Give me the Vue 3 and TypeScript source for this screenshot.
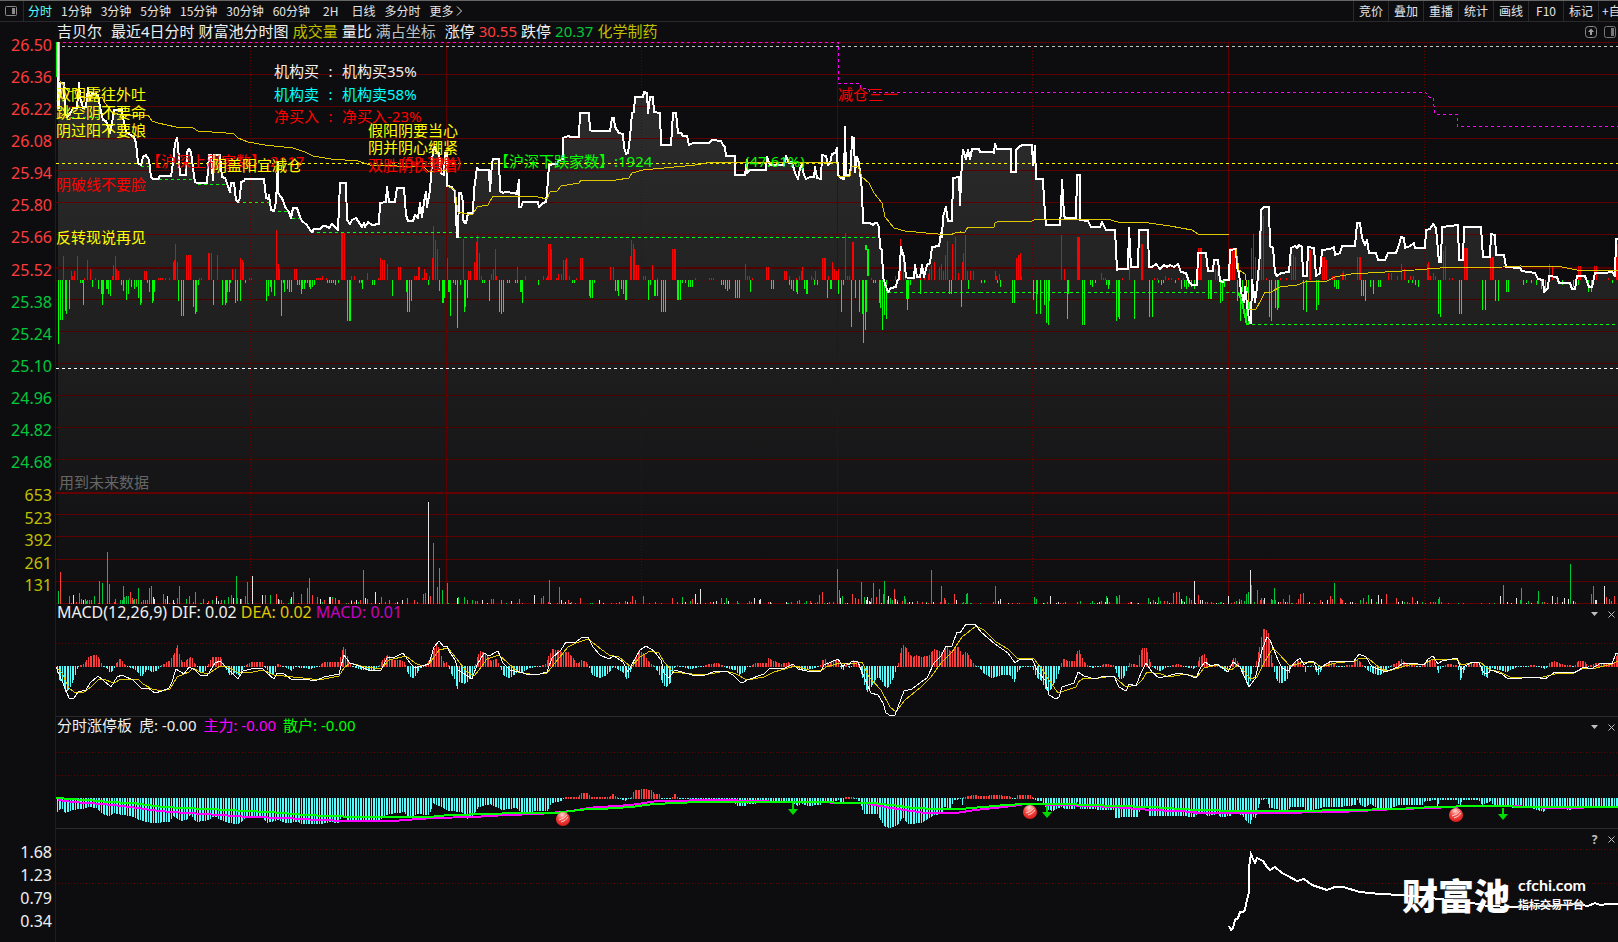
<script setup lang="ts">
type Point = [number, number]
interface Chunk { x0: number; y0: number; w: number; d: string }
interface Note { x: number; y: number; text: string; tone: string }

const UNIT = 1568
const LEFT = 56
const WIDTH = 1562
const MINUTES = 960

/* Series are stored in chunks: an origin, the width that the chunk spans, and "x,y" samples. */
const chunk = (x0: number, y0: number, w: number, d: string): Chunk => ({ x0, y0, w, d })

function pts(c: Chunk): Point[] {
  return c.d.trim().split(/\s+/).map((p): Point => {
    const [x, y] = p.split(',').map(Number)
    return [Math.round(c.x0 + (x * c.w) / UNIT), Math.round(c.y0 + y / 3)]
  })
}
const all = (cs: Chunk[]): Point[] => cs.flatMap(pts)
const line = (p: Point[]): string => 'M' + p.map(([x, y]) => `${x} ${y}`).join('L')
const bars = (p: Point[], zero: number): string =>
  p.map(([x, y]) => `M${x} ${zero}h1V${y}h-1z`).join('')

/* One bar per trading minute, snapped to whole pixels. */
function comb(p: Point[], zero: number): { up: string; down: string } {
  const up: Point[] = []
  const down: Point[] = []
  let i = 0
  for (let m = 0; m < MINUTES; m++) {
    const x = LEFT + 1 + Math.round((m * WIDTH) / MINUTES)
    while (i < p.length - 2 && p[i + 1][0] < x) i++
    const [ax, ay] = p[i]
    const [bx, by] = p[i + 1]
    const t = bx > ax ? Math.min(1, Math.max(0, (x - ax) / (bx - ax))) : 0
    const y = Math.round(ay + (by - ay) * t)
    if (y < zero) up.push([x, y])
    else down.push([x, Math.max(y, zero + 1)])
  }
  return { up: bars(up, zero + 1), down: bars(down, zero) }
}

const periods = ['分时', '1分钟', '3分钟', '5分钟', '15分钟', '30分钟', '60分钟', '2H', '日线', '多分时']
const tools = ['竞价', '叠加', '重播', '统计', '画线', 'F10', '标记', '+自']
const prices = ['26.50', '26.36', '26.22', '26.08', '25.94', '25.80', '25.66', '25.52', '25.38', '25.24', '25.10', '24.96', '24.82', '24.68']
const volumes = ['653', '523', '392', '261', '131']
const ratios = ['1.68', '1.23', '0.79', '0.34']

const headings = [
  { text: '吉贝尔', tone: 'white wide' }, { text: '最近4日分时', tone: 'white' },
  { text: '财富池分时图', tone: 'white' }, { text: '成交量', tone: 'olive' },
  { text: '量比', tone: 'white' }, { text: '满占坐标', tone: 'silver wide' },
  { text: '涨停', tone: 'white' }, { text: '30.55', tone: 'up' },
  { text: '跌停', tone: 'white' }, { text: '20.37', tone: 'down' },
  { text: '化学制药', tone: 'olive' },
]

const notes: Note[] = [
  { x: 56, y: 95, text: '双阴露往外吐', tone: 'yellow' },
  { x: 56, y: 113, text: '跳空阴不要命', tone: 'yellow' },
  { x: 56, y: 131, text: '阴过阳不要娘', tone: 'yellow' },
  { x: 56, y: 185, text: '阴破线不要脸', tone: 'red' },
  { x: 56, y: 238, text: '反转现说再见', tone: 'yellow' },
  { x: 146, y: 162, text: '【沪深上涨家数】:2117', tone: 'red' },
  { x: 212, y: 166, text: '阴盖阳宜减仓', tone: 'yellow' },
  { x: 401, y: 162, text: '(52.39%)', tone: 'red' },
  { x: 368, y: 166, text: '双胜阴快溜着', tone: 'red' },
  { x: 368, y: 131, text: '假阳阴要当心', tone: 'yellow' },
  { x: 368, y: 148, text: '阴并阴心绷紧', tone: 'yellow' },
  { x: 494, y: 162, text: '【沪深下跌家数】:1924', tone: 'lime' },
  { x: 745, y: 162, text: '(47.61%)', tone: 'lime' },
  { x: 838, y: 95, text: '减仓三一', tone: 'red' },
  { x: 59, y: 483, text: '用到未来数据', tone: 'dim' },
]
const flows = [
  { y: 72, name: '机构买', value: '机构买35%', tone: 'white' },
  { y: 95, name: '机构卖', value: '机构卖58%', tone: 'aqua' },
  { y: 117, name: '净买入', value: '净买入-23%', tone: 'red' },
]
const place = (x: number, y: number) => ({ left: `${((x - LEFT) / WIDTH) * 100}%`, top: `${y - 53}px` })

const hGrid = [74, 106, 138, 170, 202, 234, 299, 331, 363, 395, 427, 459, 514, 536, 559, 581]
const days = [447, 838, 1229]
const noons = [250, 641, 1032, 1424]

const pricePts: Point[] = all([
  chunk(0, 0, 540, `168,127 168,325 172,325 174,250 185,250 188,340 194,352 200,345 206,335 212,325 225,325 228,250 232,290 240,325 250,322 255,265 260,300 266,280 285,285 290,320 298,360 308,362 318,400 324,370 332,330 354,330 358,355 366,395 380,405 388,410 396,430 402,490 408,495 414,470 424,466 432,480 438,530 444,537 460,537 465,528 496,528 502,490 508,430 513,415 518,435 522,525 540,525 544,455 550,447 556,455 560,505 566,545 572,550 600,548 606,465 612,465 618,540 622,465 640,465 646,530 652,535 658,550 664,570 668,575 672,548 680,548 684,600 690,606 696,595 700,545 708,543 712,538 768,538 772,595 778,597 782,585 788,630 796,632 802,605 806,490 808,580 815,590 822,600 828,620 838,635 846,655 852,625 862,625 870,650 876,662 890,675 900,690 905,695 912,688 930,688 938,678 948,678 955,685 965,672 982,690 986,548 1004,548 1008,660 1015,672 1022,660 1035,655 1050,680 1056,668 1060,680 1070,665 1080,675 1100,672 1104,610 1120,605 1125,560 1130,605 1148,605 1152,565 1174,565 1178,645 1184,662 1198,662 1206,645 1214,655 1220,610 1226,650 1230,605 1236,575 1240,620 1248,570 1254,490 1258,450 1264,440 1268,460 1276,460 1280,520 1288,525 1292,460 1297,460`),
  chunk(440, 30, 540, `21,467 35,470 45,485 48,620 52,620 55,490 62,490 66,515 68,570 72,580 76,578 80,550 95,550 100,480 104,435 108,415 114,420 142,420 146,482 150,400 155,388 170,388 175,482 182,490 190,485 215,490 224,492 228,450 230,530 236,530 242,516 284,516 288,530 298,518 308,515 312,490 316,405 322,405 326,402 340,402 346,390 356,388 358,325 372,318 380,322 403,320 406,250 432,250 435,300 440,303 494,303 498,263 506,263 508,292 520,308 530,312 534,350 540,372 546,370 552,320 558,250 564,245 566,202 588,200 592,186 600,188 604,248 610,200 618,202 622,245 638,250 642,345 672,345 676,250 686,250 690,310 700,310 706,318 718,318 724,345 735,340 780,340 790,330 815,332 822,345 828,350 830,378 856,378 858,435 886,435 890,390 892,428 900,420 946,420 950,380 958,405 1000,405 1006,378 1012,400 1022,395 1030,430 1040,447 1044,415 1050,405 1056,435 1062,447 1075,440 1086,440 1090,410 1096,445 1106,447 1110,375 1120,378 1126,405 1132,398 1138,372 1148,370 1153,355 1157,435 1165,445 1172,447 1176,290 1180,435 1190,435 1194,400 1197,320 1202,325 1206,425 1212,380 1218,400 1224,480 1228,578 1250,578 1256,584 1262,578 1270,580 1274,590 1278,655 1284,660 1286,740 1294,770 1302,785 1310,775 1325,770 1328,752 1334,748 1340,650 1346,680 1352,740 1358,745 1376,745 1380,705 1384,740 1395,742 1400,705 1406,740 1414,705 1424,700 1428,650 1450,648 1454,610 1458,620 1462,560 1468,532 1474,572 1486,572 1490,445 1506,440 1510,525`),
  chunk(960, 120, 660, `0,255 4,120 8,90 14,118 18,90 24,118 28,88 46,88 48,97 78,97 80,100 84,72 88,87 120,87 122,156 132,156 134,90 142,78 150,75 170,75 174,135 178,78 181,177 197,177 200,240 205,315 238,315 240,270 243,180 246,285 250,294 275,294 277,165 284,165 286,300 304,303 312,321 333,321 337,306 348,330 368,330 372,450 378,447 398,447 402,325 406,441 422,441 425,330 446,330 449,441 456,441 465,432 475,447 485,435 492,442 500,435 508,440 518,432 524,455 538,460 545,485 552,495 562,495 565,400 585,400 588,453 602,453 604,420 614,420 618,483 624,486 628,480 638,480 642,390 655,388 658,440 664,460 668,515 675,545 678,500 684,580 688,610 692,610 694,480 700,545 706,500 712,400 716,270 722,260 733,262 737,378 744,385 748,460 753,468 762,460 782,455 787,385 796,378 800,385 806,375 812,380 816,468 824,468 826,380 842,385 845,468 856,460 860,390 880,388 888,380 892,405 902,400 908,378 938,378 942,310 950,310 954,355 962,375 968,360 972,400 988,400 992,420 1010,420 1016,400 1036,400 1042,375 1048,350 1054,355 1058,385 1068,378 1078,368 1082,383 1104,383 1108,330 1116,328 1124,312 1132,325 1138,425 1142,425 1144,321 1165,318 1184,316 1186,420 1194,420 1198,321 1238,321 1242,411 1258,411 1262,342 1270,345 1274,405 1292,405 1298,441 1330,443 1336,453 1366,458 1374,478 1384,480 1388,515 1396,505 1400,468 1418,470 1424,488 1450,490 1454,507 1462,507 1466,468 1486,468 1494,500 1502,500 1508,460 1530,458 1550,456 1556,468 1558,357 1568,357`),
])
const priceLine = line(pricePts)
const priceArea = `${priceLine}V604H58Z`

const averages = [
  line(all([chunk(0, 0, 540, `170,127 170,240 188,260 200,275 225,270 235,290 295,290 305,310 325,335 350,345 430,345 440,362 460,370 510,380 560,385 575,393 655,398 680,402 690,415 720,425 770,436 850,443 885,455 910,468 960,478 1040,484 1075,495 1230,500 1245,515 1297,510`)])),
  line(all([chunk(440, 30, 540, `21,467 45,480 52,545 78,552 95,552 108,532 140,525 155,497 225,497 285,500 310,507 318,485 340,482 350,468 405,458 410,451 510,449 550,443 558,430 590,420 650,413 740,405 790,395 930,395 1100,399 1153,396`)])),
  line(all([
    chunk(440, 30, 540, `1157,440 1190,438 1196,408 1215,408 1225,440 1245,460 1260,488 1282,520 1292,560 1318,595 1350,602 1410,610 1480,615 1495,608 1510,606`),
    chunk(960, 120, 660, `0,338 12,336 18,322 80,322 84,310 92,304 172,302 180,298 350,298 375,305 450,308 500,318 550,330 566,341 638,341`),
  ])),
  line(all([chunk(960, 120, 660, `655,388 664,450 676,462 684,520 690,570 704,568 716,540 724,517 738,515 760,502 800,496 820,485 872,484 890,472 930,463 970,458 1050,453 1140,443 1290,441 1330,438 1430,441 1465,451 1568,451`)])),
]

const lowDashes = [
  [0, 0, 188, 351, 300], [0, 0, 408, 497, 432], [0, 0, 444, 538, 570], [0, 0, 575, 553, 660],
  [0, 0, 664, 575, 684], [0, 0, 688, 607, 790], [0, 0, 790, 633, 838], [0, 0, 848, 655, 876],
  [0, 0, 903, 697, 1323], [0, 0, 1330, 712, 1360], [440, 30, 52, 622, 1272], [440, 30, 1302, 787, 1568],
].map(([ox, oy, a, y, b]) => `M${Math.round(ox + (a * 540) / UNIT)} ${Math.round(oy + y / 3)}H${Math.round(ox + (b * 540) / UNIT)}`).join('')
  + 'M980 292H1238M1252 324H1618'
const lowSteep = 'M57 42V77M866 245V249L868 250V276M1238 292L1242 302L1247 325'
const highDashes = 'M57 42H838V83H860V88H868L870 92H1425L1429 97H1433L1435 114H1457V126H1618'

const momentumUp = bars(all([
  chunk(0, 230, 540, `184,78 207,123 210,138 216,123 225,78 245,145 254,90 260,122 262,117 277,145 326,138 329,105 335,78 338,117 344,123 375,145 419,123 425,123 458,144 464,144 470,144 480,144 492,144 501,96 504,90 509,42 515,96 541,75 547,75 553,75 579,144 585,144 605,69 608,69 614,69 631,75 675,117 681,117 698,84 704,90 707,96 722,144 728,144 802,0 808,102 811,117 855,117 860,117 917,144 923,144 929,144 936,138 946,144 989,8 992,8 998,8 1020,138 1027,138 1067,129 1097,144 1102,144 1104,84 1110,90 1116,90 1125,102 1155,111 1161,111 1201,138 1207,138 1215,111 1218,111 1224,144 1232,117 1238,129 1247,138 1253,84 1256,-12 1262,30 1268,57 1297,84 1343,27 1360,123 1366,123 1375,96 1381,37 1384,15 1390,69 1396,138 1427,132 1432,117 1436,57 1441,138 1502,111 1523,138`),
  chunk(440, 30, 540, `300,738 307,743 312,738 315,642 320,642 323,657 338,744 344,732 350,732 358,690 362,690 367,684 375,738 396,744 406,684 412,684 495,711 501,711 553,678 556,630 561,642 564,657 570,705 576,705 590,738 596,738 617,705 629,744 675,657 680,657 683,657 741,744 782,744 788,744 794,744 887,702 892,738 898,738 907,744 947,711 953,711 1000,723 1006,723 1012,738 1035,744 1041,738 1047,723 1052,711 1076,738 1082,744 1090,723 1110,684 1114,684 1119,684 1128,738 1139,696 1144,717 1150,723 1155,717 1177,610 1181,738 1187,738 1195,636 1200,636 1252,744 1320,738 1330,723 1337,627 1343,675 1349,735 1372,738 1395,735 1405,740 1416,732 1421,717 1427,705 1433,696 1450,711 1456,702 1461,723 1467,675 1471,633 1488,642 1495,621 1503,729 1517,696 1520,669 1525,615 1531,723 1538,723 1549,723`),
  chunk(960, 120, 660, `83,453 86,468 92,462 134,414 137,405 142,399 146,468 239,426 241,345 247,447 277,351 280,351 283,351 335,459 340,474 345,474 386,474 401,441 430,372 433,372 462,474 468,474 487,468 493,474 502,474 517,474 530,474 566,384 569,384 573,384 605,447 611,453 642,384 646,384 650,390 692,384 697,342 702,411 711,330 716,273 721,288 727,474 761,474 775,474 787,384 790,405 795,411 829,390 832,390 859,411 864,411 869,420 883,468 888,468 907,459 911,453 915,462 943,411 947,411 950,411 1017,459 1023,459 1039,468 1048,432 1054,447 1069,468 1077,468 1109,432 1111,426 1117,468 1123,459 1128,468 1147,393 1152,378 1161,474 1170,474 1198,384 1202,384 1205,384 1259,411 1264,411 1267,411 1400,432 1407,438 1468,438 1473,438 1507,438 1512,438 1540,474 1558,378 1562,372 1567,357`),
]), 280)
const momentumDown = bars(all([
  chunk(0, 230, 540, `169,342 173,270 179,270 188,243 193,251 199,237 231,159 237,159 240,225 268,171 286,177 292,192 297,225 300,192 307,177 312,177 315,192 320,198 350,165 358,183 365,210 367,198 373,192 381,171 390,177 396,171 402,204 406,225 410,219 428,159 434,186 440,219 443,213 448,186 518,213 525,258 530,258 561,231 567,252 570,246 576,165 619,225 646,225 652,225 657,219 660,186 666,186 669,159 683,219 689,213 696,213 712,159 771,213 773,213 779,198 785,171 788,186 795,198 817,258 823,159 826,186 832,177 840,186 846,186 863,165 869,165 875,192 878,177 884,177 886,159 892,159 898,171 901,177 907,171 913,165 950,159 956,159 962,159 968,159 974,165 980,159 1007,273 1012,273 1015,273 1043,159 1049,159 1052,177 1079,165 1087,165 1139,198 1178,186 1181,246 1187,246 1192,213 1244,165 1276,183 1282,219 1285,219 1290,204 1300,186 1305,186 1308,258 1314,159 1320,165 1328,294 1337,165 1346,246 1351,231 1357,204 1399,159 1404,159 1421,213 1450,246 1456,252 1462,246 1473,159 1479,159 1494,159 1500,159 1509,186 1512,186 1517,219 1563,165`),
  chunk(440, 30, 540, `382,759 388,759 434,798 437,804 442,804 448,759 509,783 515,783 518,798 525,777 532,792 538,810 541,810 605,810 611,765 620,798 625,798 631,798 643,846 648,846 652,846 689,810 692,810 698,810 704,759 711,759 721,771 727,771 733,771 817,765 823,765 829,777 834,783 840,777 857,804 863,804 869,804 901,786 962,777 968,777 1014,765 1020,777 1026,783 1033,786 1038,792 1058,777 1064,792 1067,792 1087,765 1096,765 1125,804 1131,777 1134,777 1157,792 1163,820 1165,846 1171,765 1192,891 1206,804 1218,846 1224,852 1229,939 1233,900 1238,846 1256,759 1262,759 1276,820 1279,834 1284,900 1290,855 1294,867 1352,807 1357,840 1360,807 1366,765 1395,792 1479,792 1485,792 1512,831 1534,777`),
  chunk(960, 120, 660, `51,489 56,489 87,489 94,501 124,549 129,549 173,540 180,582 184,522 189,582 199,555 205,609 209,615 211,543 254,597 257,523 290,615 294,615 308,495 314,501 320,489 347,495 351,507 355,495 371,603 375,591 378,597 413,597 450,591 456,591 471,489 477,495 482,489 511,489 525,507 531,501 537,507 541,501 549,501 556,507 588,537 593,537 597,537 618,549 622,543 628,501 659,543 666,603 671,515 680,600 684,615 735,591 739,603 748,564 752,570 755,564 816,570 821,576 845,570 851,555 889,501 893,507 898,507 952,528 957,528 961,543 973,501 980,522 993,501 999,501 1065,489 1073,489 1081,495 1088,501 1135,582 1140,591 1185,582 1191,582 1240,570 1247,570 1271,543 1278,543 1296,516 1301,516 1338,495 1345,489 1357,489 1369,495 1380,507 1391,516 1430,495 1456,501 1468,495 1492,516 1500,516 1550,489`),
]), 280)

const volumeUp = bars(all([
  chunk(0, 470, 540, `175,306 199,378 228,380 222,396 252,390 258,390 285,398 330,396 378,366 384,384 396,387 410,396 474,372 480,387 513,384 560,397 583,398 605,393 626,378 640,398 672,375 689,384 712,378 718,336 770,398 800,372 823,398 852,366 866,398 907,375 921,381 941,390 965,387 981,390 1010,398 1027,396 1045,390 1107,381 1118,396 1148,398 1201,390 1210,396 1235,369 1250,378 1258,219 1297,339 1380,393 1386,393 1425,387 1432,387 1484,398 1500,398 1516,398`),
  chunk(540, 490, 540, `2,324 8,318 22,336 27,270 54,291 50,338 68,338 80,330 83,338 103,338 117,324 207,338 220,338 268,318 277,330 262,336 300,318 384,324 442,327 495,336 600,338 608,333 614,336 662,336 717,338 783,333 803,336 820,306 840,336 850,336 863,237 890,338 907,312 922,327 962,324 977,321 1029,297 1038,330 1050,333 1110,336 1128,338 1136,240 1162,336 1172,324 1177,330 1201,336 1203,312 1227,336 1241,309 1252,338 1322,288 1370,338 1385,338 1391,338 1436,338 1511,338 1518,338 1558,336`),
  chunk(1078, 490, 540, `68,333 90,336 114,324 145,338 150,336 172,338 219,330 251,333 271,338 286,306 347,315 393,338 416,336 452,336 474,330 503,285 521,300 528,330 532,324 536,330 586,336 596,327 612,315 618,338 634,338 640,327 646,312 664,338 702,330 731,318 737,327 760,324 763,327 767,330 805,338 837,336 895,312 924,324 956,336 962,338 971,321 1008,338 1023,336 1032,336 1053,336 1075,338 1119,338 1194,338 1353,336 1363,338 1491,312 1496,288 1534,321 1557,318 1444,336`),
]), 604)
const volumeDown = bars(all([
  chunk(0, 470, 540, `169,363 205,398 230,369 234,387 246,387 250,393 265,390 274,378 288,333 297,339 312,246 317,342 335,387 347,390 355,390 358,348 361,381 367,378 373,378 386,390 390,387 402,354 416,390 422,390 428,390 434,354 439,348 490,398 521,348 541,387 548,378 567,366 580,398 588,387 617,390 643,390 650,390 663,381 686,318 701,387 720,398 770,375 785,375 809,390 817,390 835,398 843,387 875,372 890,354 898,324 930,390 936,396 965,381 974,384 985,390 1004,398 1020,390 1040,396 1055,300 1067,387 1076,398 1130,390 1183,384 1227,372 1268,351 1276,294 1282,360 1300,398 1329,381 1348,381 1357,390 1370,390 1455,390 1470,398 1508,387`),
  chunk(540, 490, 540, `91,336 145,338 150,338 230,336 248,333 316,338 335,336 352,338 399,336 413,321 435,333 480,338 527,324 541,324 571,333 576,338 670,338 721,338 730,336 745,333 751,330 767,338 773,333 798,338 811,315 826,338 869,300 878,318 886,338 916,324 933,276 940,321 968,279 983,306 985,297 997,312 1000,273 1007,330 1015,324 1023,330 1052,336 1058,318 1061,327 1067,338 1096,333 1120,336 1165,288 1186,338 1224,338 1233,338 1238,312 1248,338 1279,338 1316,336 1370,338 1433,321 1441,327 1464,338 1472,336 1520,338 1525,336`),
  chunk(1078, 490, 540, `7,333 36,338 40,333 46,338 82,318 111,318 120,315 204,324 233,321 239,333 257,333 277,309 294,306 303,333 315,318 323,324 329,330 370,336 375,336 385,336 407,338 413,336 443,338 458,333 468,327 483,333 489,312 495,306 512,336 559,327 564,330 570,294 573,330 622,338 654,309 607,336 684,338 744,279 820,330 829,324 843,315 866,336 948,336 979,338 1000,336 1038,336 1044,327 1047,321 1104,338 1171,338 1209,338 1235,285 1287,294 1284,330 1308,333 1337,303 1332,333 1392,321 1348,336 1430,222 1543,327 1549,333`),
]), 604)
const volumeFlat = bars(all([
  chunk(0, 470, 540, `213,375 240,390 445,381 448,387 486,378 501,390 506,398 600,398 628,384 634,393 678,384 696,387 733,318 762,375 806,387 846,381 928,387 956,381 959,381 1020,393 1033,390 1060,384 1088,366 1100,398 1152,396 1168,390 1244,96 1326,384 1401,390 1413,398 1485,392 1551,375`),
  chunk(540, 490, 540, `30,338 60,330 74,336 88,338 172,330 182,338 254,336 411,338 420,336 451,312 457,338 466,297 503,336 512,333 533,338 547,333 622,324 640,327 637,330 667,336 715,336 788,338 832,338 872,324 892,338 946,330 949,321 954,333 959,336 991,338 1011,318 1032,327 1036,336 1072,336 1081,336 1120,338 1142,336 1209,330 1331,333 1337,327 1360,338 1460,338 1482,318 1497,338 1503,336`),
  chunk(1078, 490, 540, `54,338 60,336 77,336 85,324 155,336 175,338 210,336 225,336 228,338 265,338 300,327 309,336 338,273 341,338 355,330 361,330 400,338 422,338 437,318 467,336 498,240 541,324 580,336 601,336 672,336 708,336 723,330 775,338 790,336 797,336 852,327 872,315 881,327 928,336 940,333 985,333 1226,318 1247,336 1256,338 1273,324 1302,338 1316,338 1375,318 1386,338 1405,336 1412,324 1424,327 1438,333 1502,330 1505,330 1528,288`),
]), 604)

const macd = comb(all([
  chunk(0, 470, 540, `164,600 170,630 180,640 190,665 198,660 206,645 214,625 220,605 226,589 232,585 245,578 255,562 268,555 282,556 290,573 300,589 310,598 320,608 330,594 338,580 345,567 352,568 358,580 366,589 390,596 400,608 410,620 418,608 426,598 440,608 455,600 465,589 480,578 495,570 504,548 515,525 522,567 530,580 540,570 555,558 562,580 572,592 585,612 595,602 606,575 614,561 640,561 648,578 660,605 668,617 680,610 695,617 703,600 712,589 725,577 760,577 770,595 785,610 797,617 803,583 820,588 838,597 846,604 856,592 900,598 920,590 940,577 985,577 990,545 998,525 1004,550 1012,580 1022,592 1050,600 1085,600 1098,592 1108,570 1126,553 1136,570 1160,570 1172,575 1182,605 1194,627 1206,618 1218,598 1226,590 1240,580 1250,565 1262,528 1270,522 1280,558 1290,580 1297,577 1306,605 1318,628 1328,657 1334,635 1346,642 1358,632 1372,608 1382,570 1392,542 1402,545 1416,560 1425,572 1440,568 1452,590 1462,615 1472,625 1485,620 1500,607 1515,610 1530,598 1550,590`),
  chunk(540, 490, 540, `0,528 16,523 24,498 34,477 50,480 65,487 80,485 92,502 106,522 120,510 135,516 143,535 152,555 170,565 190,558 200,545 212,530 225,538 240,550 252,572 262,545 272,510 284,484 300,489 316,515 330,528 345,555 354,580 362,595 378,580 386,540 394,523 410,530 435,538 465,530 490,523 515,519 535,527 545,538 565,540 578,555 592,547 602,530 625,520 655,518 663,504 680,513 700,521 720,516 735,527 750,540 785,538 810,530 820,510 828,508 835,520 850,512 865,508 878,545 888,520 900,540 910,510 920,520 930,540 940,585 950,607 962,592 972,570 982,560 992,575 1004,597 1018,580 1032,545 1040,520 1048,475 1054,465 1064,475 1074,495 1084,500 1090,492 1105,502 1130,496 1142,477 1160,482 1170,486 1180,465 1192,490 1205,467 1215,472 1224,495 1236,484 1250,506 1264,525 1275,535 1290,553 1312,563 1340,556 1362,555 1376,575 1386,545 1396,532 1428,530 1440,560 1455,572 1464,590 1474,608 1488,592 1500,560 1510,530 1515,505 1530,513 1552,513 1558,483 1562,468`),
  chunk(1078, 490, 540, `0,468 6,492 14,510 24,526 45,534 60,527 75,523 105,525 110,550 120,568 130,563 142,535 147,519 170,525 178,495 186,475 197,475 206,508 214,532 235,543 250,536 262,528 290,523 305,528 335,538 345,525 350,500 368,489 376,515 384,524 400,521 412,535 430,547 442,525 450,503 456,503 464,520 480,555 497,590 506,535 515,528 524,487 530,440 538,416 544,416 552,430 558,470 564,520 572,560 582,580 592,578 610,563 616,530 625,518 640,512 650,525 658,547 664,530 680,525 690,545 698,556 708,535 720,523 735,517 750,527 795,525 806,508 814,506 824,525 840,540 852,550 875,556 890,545 905,528 925,517 937,506 950,520 975,525 990,530 1005,520 1020,512 1035,510 1046,550 1054,530 1075,522 1100,525 1110,570 1120,540 1132,522 1165,520 1174,555 1188,565 1198,535 1220,540 1245,546 1272,530 1325,525 1355,536 1368,520 1384,512 1400,522 1440,528 1452,514 1468,513 1480,528 1500,520 1555,520 1560,500 1568,490`),
]), 666)
const dif = line(all([
  chunk(0, 470, 540, `164,592 190,655 200,685 215,683 226,667 250,660 262,640 285,618 300,630 322,650 340,622 355,615 385,630 400,645 412,658 430,655 450,670 470,662 490,655 498,635 512,597 535,612 550,590 565,600 580,615 600,618 625,580 640,574 655,592 690,626 705,602 730,597 760,595 775,608 797,628 803,610 825,612 845,628 900,630 915,634 940,622 985,612 1000,555 1015,578 1050,590 1070,600 1105,600 1125,565 1148,562 1170,549 1190,580 1205,594 1225,587 1245,583 1260,530 1275,513 1290,530 1297,528 1305,543 1320,570 1330,600 1345,608 1370,628 1385,585 1405,550 1420,557 1445,544 1460,578 1480,600 1520,608 1535,615 1560,613`),
  chunk(540, 490, 540, `0,552 20,545 35,505 62,480 75,455 105,457 120,443 138,442 155,470 175,495 200,507 215,498 240,515 255,545 265,528 290,480 308,468 330,484 350,510 360,550 375,563 392,540 440,555 480,555 510,543 540,543 560,555 580,575 592,576 600,570 650,553 665,538 710,535 735,523 750,538 775,543 815,543 825,525 865,508 880,530 888,518 898,525 905,514 922,515 940,560 960,610 980,615 995,640 1005,668 1020,678 1030,675 1040,650 1058,602 1080,598 1105,575 1125,563 1145,520 1165,498 1180,468 1195,467 1210,425 1220,428 1238,403 1262,403 1280,425 1320,463 1360,490 1378,520 1395,507 1430,508 1445,545 1465,570 1478,615 1498,628 1508,620 1516,592 1550,580 1561,545`),
  chunk(1078, 490, 540, `0,545 18,558 50,568 68,560 105,557 118,590 138,604 148,583 168,587 182,550 197,520 215,547 235,563 262,558 290,550 320,555 342,565 358,530 370,516 385,527 405,523 435,547 450,516 470,530 497,590 515,568 535,480 548,442 558,450 570,480 580,510 592,533 610,542 630,515 646,505 656,525 670,514 685,515 695,540 710,528 735,514 800,514 815,492 835,502 855,530 880,540 890,545 930,532 945,520 970,518 1005,524 1015,508 1032,498 1046,522 1058,512 1100,505 1112,540 1125,527 1145,517 1165,518 1180,550 1188,553 1200,540 1230,553 1250,566 1290,565 1330,560 1356,568 1385,547 1440,548 1470,530 1490,537 1520,520 1552,522 1562,490 1568,488`),
]))
const dea = line(all([
  chunk(0, 470, 540, `164,590 180,610 200,655 215,667 245,665 265,652 285,630 300,628 330,638 350,626 400,627 415,643 440,658 470,663 495,657 515,620 550,605 560,595 580,605 605,613 640,587 655,588 695,610 735,605 765,600 795,615 850,620 905,628 940,628 985,618 1000,595 1015,578 1060,590 1105,596 1130,570 1180,558 1205,580 1225,587 1250,580 1275,540 1300,535 1325,565 1355,605 1375,617 1390,600 1415,568 1450,555 1475,580 1505,605 1540,612 1560,612`),
  chunk(540, 490, 540, `0,552 20,550 45,520 80,470 105,458 140,447 165,468 200,495 230,502 265,530 290,500 320,483 345,490 360,515 385,545 440,552 490,552 540,543 570,552 600,570 650,560 680,545 740,527 780,540 815,543 830,532 870,518 905,523 935,517 955,560 990,600 1015,650 1035,665 1060,630 1105,590 1135,560 1165,520 1195,485 1225,440 1265,408 1290,420 1325,455 1360,478 1385,503 1435,507 1455,535 1485,580 1505,610 1530,600 1555,590 1561,578`),
  chunk(1078, 490, 540, `0,575 18,563 60,565 105,558 120,572 140,590 170,585 185,570 200,545 240,553 265,560 310,553 345,560 365,533 405,525 445,540 465,525 485,545 500,568 520,562 540,520 565,474 580,490 615,527 655,516 685,517 705,530 750,520 805,513 820,505 845,508 880,538 900,543 940,530 970,522 1005,523 1030,508 1100,508 1112,525 1145,520 1168,516 1185,530 1200,541 1225,545 1255,560 1350,562 1385,553 1440,548 1470,535 1505,533 1550,522 1568,514`),
]))

const W3 = 1568 / 3
const board = comb(all([
  chunk(0, 710, 640, `142,305 150,290 160,310 175,300 200,298 215,292 235,295 250,312 265,318 280,310 300,315 320,318 340,330 370,338 415,335 425,318 440,332 455,330 465,315 480,335 510,330 525,318 540,330 560,338 580,342 590,335 605,318 640,318 655,338 680,330 700,338 730,335 740,342 790,342 805,335 830,340 836,315 850,330 930,330 945,315 970,308 990,305 1000,325 1020,312 1050,315 1060,278 1080,290 1100,303 1130,305 1145,328 1160,318 1170,290 1200,282 1230,300 1265,295 1275,305 1340,303 1350,280 1375,272 1385,262 1415,262 1420,249 1440,250 1445,261 1468,261`),
  chunk(600, 710, 600, `0,261 24,261 28,252 36,253 42,261 65,272 80,262 84,250 92,240 115,237 136,240 142,252 156,252 160,268 185,266 190,252 198,253 203,266 230,268 350,272 356,288 378,288 385,282 435,280 500,275 515,288 525,278 540,288 575,286 585,272 600,276 625,270 632,285 640,261 660,262 672,270 680,275 687,312 725,312 735,335 745,350 760,353 780,342 790,320 805,342 838,338 860,325 870,315 893,312 900,290 915,295 925,270 940,268 945,285 948,262 975,255 1000,258 1030,256 1070,259 1078,270 1090,256 1125,255 1140,272 1155,272 1165,298 1180,303 1205,292 1212,297 1240,297 1248,268 1254,297 1340,300 1347,325 1375,322 1405,320 1412,292 1430,295 1434,317 1515,318`),
  chunk(1180, 710, W3, `0,318 45,322 50,305 70,308 80,318 110,312 120,320 150,318 155,308 185,315 200,340 210,342 215,318 225,325 235,295 240,270 262,268 266,295 325,302 330,290 370,290 378,302 400,300 430,290 480,290 525,285 530,270 540,285 555,292 570,282 590,295 625,300 650,285 725,285 735,272 765,270 772,290 776,270 830,270 838,290 845,270 895,270 905,285 930,272 940,285 970,288 1000,295 1050,295 1090,305 1100,292 1170,300 1200,292 1260,295 1300,290 1314,290`),
]), 798)
const retail = line(all([
  chunk(0, 710, 640, `137,265 175,268 205,271 250,274 260,276 325,278 360,285 400,290 450,294 560,301 600,304 660,307 750,314 800,318 880,320 1050,320 1100,315 1200,312 1260,308 1360,308 1400,302 1440,296`),
  chunk(600, 710, 600, `0,296 80,290 140,283 260,277 380,275 480,277 510,277 710,278 760,286 820,294 880,297 940,297 1000,291 1060,286 1110,282 1210,283 1350,287 1440,292 1560,299`),
  chunk(1180, 710, W3, `50,299 185,302 350,302 500,299 650,296 760,292 900,288 1095,290 1314,291`),
]))
const major = line(all([
  chunk(0, 710, 640, `142,270 180,275 250,283 320,291 370,299 420,306 500,313 610,320 700,324 780,330 850,333 960,332 1060,325 1160,321 1240,314 1320,312 1400,302 1460,291`),
  chunk(600, 710, 600, `0,291 80,285 150,273 320,270 480,275 510,277 690,280 760,293 850,308 930,308 980,300 1080,287 1110,282 1210,285 1340,292 1440,299 1560,307`),
  chunk(1180, 710, W3, `40,308 160,310 255,310 480,305 650,297 760,294 860,288 1000,288 1110,294 1314,292`),
]))
const balls: Point[] = [[563, 819], [1030, 812], [1456, 815]]
const arrows: Point[] = [[793, 803], [1047, 806], [1503, 808]]

const ratioLine = line(all([
  chunk(1180, 710, W3, `148,648 153,660 160,655 166,630 175,625 180,605 190,607 195,600 202,570 206,545 208,470 212,433 218,448 226,458 231,443 250,452 260,472 270,480 285,470 305,488 325,497 350,513 372,508 395,525 440,540 465,531 490,532 540,547 600,551 665,556 780,568 830,572 880,580 920,588 1000,590 1100,588 1190,583 1225,588 1245,580 1260,585 1285,582 1314,582`),
]))
</script>

<template>
  <div class="app">
    <header class="toolbar">
      <button class="panel-btn" type="button" aria-label="侧栏">
        <svg width="12" height="12" viewBox="0 0 12 12"><rect x="0.5" y="1.5" width="11" height="9" rx="1" fill="none" stroke="#8a8a8a" /><rect x="7" y="3" width="3" height="6" fill="#8a8a8a" /></svg>
      </button>
      <nav class="periods">
        <button v-for="p in periods" :key="p" type="button" :class="{ on: p === '分时', spaced: p === '2H' }">{{ p }}</button>
        <button type="button" class="more">更多<svg width="7" height="10" viewBox="0 0 7 10"><path d="M1 0.5L5.5 5L1 9.5" fill="none" stroke="#ddd" /></svg></button>
      </nav>
      <div class="tools">
        <button v-for="t in tools" :key="t" type="button">{{ t }}</button>
      </div>
    </header>

    <div class="titlebar">
      <h1 class="headings"><span v-for="h in headings" :key="h.text" :class="h.tone">{{ h.text }}</span></h1>
      <div class="title-icons">
        <button type="button" aria-label="上移"><svg width="12" height="12" viewBox="0 0 12 12"><rect x="0.5" y="0.5" width="11" height="11" rx="3" fill="none" stroke="#8a8a8a" /><path d="M6 2.5L9 6H7V9H5V6H3Z" fill="#a0a0a0" /></svg></button>
        <button type="button" aria-label="面板"><svg width="12" height="12" viewBox="0 0 12 12"><rect x="0.5" y="0.5" width="11" height="11" rx="2" fill="none" stroke="#777" /><rect x="7" y="2" width="3" height="8" fill="#777" /></svg></button>
      </div>
    </div>

    <section class="pane">
      <div class="axis">
        <ul class="price-axis"><li v-for="(p, i) in prices" :key="p" :class="[i < 8 ? 'up' : 'down', { shifted: i === 7 }]">{{ p }}</li></ul>
        <ul class="volume-axis"><li v-for="v in volumes" :key="v">{{ v }}</li></ul>
      </div>
      <div class="plot">
        <svg class="price-chart" viewBox="56 42 1562 562" preserveAspectRatio="none" role="img" aria-label="分时走势">
          <defs>
            <linearGradient id="fill" gradientUnits="userSpaceOnUse" x1="0" y1="90" x2="0" y2="600">
              <stop offset="0" stop-color="#2d2d2d" /><stop offset="0.55" stop-color="#1d1d1e" /><stop offset="1" stop-color="#0e0e10" />
            </linearGradient>
          </defs>
          <path :d="priceArea" fill="url(#fill)" />
          <g class="crisp">
            <rect v-for="y in hGrid" :key="y" x="56" :y="y" width="1562" height="1" :fill="y > 290 && y < 490 ? '#4b0000' : '#5c0000'" />
            <rect x="56" y="42" width="1562" height="1" fill="#5c0000" />
            <rect x="56" y="267" width="1562" height="2" fill="#520000" />
            <rect x="56" y="492" width="1562" height="2" fill="#640000" />
            <rect v-for="x in days" :key="x" :x="x - 1" y="42" width="1" height="562" fill="#5c0000" />
            <path v-for="x in noons" :key="x" :d="`M${x}.5 45V604`" class="dots" />
            <path d="M56 280.5H1618" class="dots" />
            <rect x="56" y="603" width="1562" height="1" fill="#640000" />
            <path :d="volumeDown" fill="#00c83c" />
            <path :d="volumeUp" fill="#ff3c3c" />
            <path :d="volumeFlat" fill="#e6e6e6" />
            <path :d="momentumUp" fill="#f00" />
            <path :d="momentumDown" fill="#0f0" />
            <path d="M56 46.5H1618" class="dash" stroke="#c4c4c4" />
            <path d="M56 163.5H1618" class="dash" stroke="#ff0" />
            <path d="M56 368.5H1618" class="dash" stroke="#fff" />
            <path :d="lowDashes" class="dash" stroke="#0f0" />
            <path :d="lowSteep" stroke="#0f0" stroke-width="2" fill="none" />
            <path :d="highDashes" class="dash" stroke="#f0f" />
            <path :d="priceLine" class="price" />
            <path v-for="a in averages" :key="a" :d="a" stroke="#e0c800" fill="none" />
          </g>
        </svg>
        <span v-for="n in notes" :key="n.text" class="note" :class="n.tone" :style="place(n.x, n.y)">{{ n.text }}</span>
        <span v-for="f in flows" :key="f.name" class="note" :class="f.tone" :style="place(274, f.y)">{{ f.name }}<i>:</i>{{ f.value }}</span>
      </div>
    </section>

    <section class="pane">
      <div class="axis"></div>
      <div class="plot">
        <div class="caption latin">
          <span class="white">MACD(12,26,9)</span><span class="white">DIF: 0.02</span><span class="gold">DEA: 0.02</span><span class="violet">MACD: 0.01</span>
          <div class="controls">
            <button type="button" aria-label="菜单"><svg width="7" height="4" viewBox="0 0 7 4"><path d="M0 0H7L3.5 4Z" fill="#c0c0c0" /></svg></button>
            <button type="button" aria-label="关闭"><svg width="7" height="7" viewBox="0 0 7 7"><path d="M0.5 0.5L6.5 6.5M6.5 0.5L0.5 6.5" stroke="#c0c0c0" /></svg></button>
          </div>
        </div>
        <svg class="macd-chart" viewBox="56 624 1562 92" preserveAspectRatio="none" role="img" aria-label="MACD">
          <g class="crisp">
            <path d="M56 643.5H1618M56 666.5H1618M56 689.5H1618" class="dots" />
            <path :d="macd.up" fill="#ff3c3c" /><path :d="macd.down" fill="#54ffff" />
            <path :d="dea" stroke="#e0c800" fill="none" /><path :d="dif" stroke="#fff" fill="none" />
          </g>
        </svg>
      </div>
    </section>

    <section class="pane ruled">
      <div class="axis"></div>
      <div class="plot">
        <div class="caption">
          <span class="white">分时涨停板</span><span class="white">虎: -0.00</span><span class="magenta">主力: -0.00</span><span class="lime">散户: -0.00</span>
          <div class="controls">
            <button type="button" aria-label="菜单"><svg width="7" height="4" viewBox="0 0 7 4"><path d="M0 0H7L3.5 4Z" fill="#c0c0c0" /></svg></button>
            <button type="button" aria-label="关闭"><svg width="7" height="7" viewBox="0 0 7 7"><path d="M0.5 0.5L6.5 6.5M6.5 0.5L0.5 6.5" stroke="#c0c0c0" /></svg></button>
          </div>
        </div>
        <svg class="board-chart" viewBox="56 737 1562 91" preserveAspectRatio="none" role="img" aria-label="分时涨停板">
          <defs>
            <radialGradient id="ball" cx="0.45" cy="0.2" r="0.85"><stop offset="0" stop-color="#ffd9d4" /><stop offset="0.45" stop-color="#f34a45" /><stop offset="1" stop-color="#d81414" /></radialGradient>
          </defs>
          <g class="crisp">
            <path d="M56 752.5H1618M56 775.5H1618" class="dots" />
            <path :d="board.up" fill="#ff3c3c" /><path :d="board.down" fill="#54ffff" />
            <path :d="major" stroke="#f0f" stroke-width="2" fill="none" />
            <path :d="retail" stroke="#0f0" stroke-width="2" fill="none" />
          </g>
          <g v-for="[x, y] in balls" :key="x">
            <circle :cx="x" :cy="y" r="7" fill="url(#ball)" />
            <path :d="`M${x - 4} ${y + 1}Q${x + 1} ${y} ${x + 4} ${y - 4}M${x - 2} ${y + 3}Q${x + 3} ${y + 2} ${x + 5} ${y - 2}`" stroke="#ffd0cc" stroke-width="1" fill="none" />
          </g>
          <path v-for="[x, y] in arrows" :key="x" :d="`M${x - 1} ${y}h2v6h4l-5 6l-5 -6h4z`" fill="#00dc00" />
        </svg>
      </div>
    </section>

    <section class="pane ruled last">
      <div class="axis">
        <ul class="ratio-axis"><li v-for="r in ratios" :key="r">{{ r }}</li></ul>
      </div>
      <div class="plot">
        <div class="caption">
          <div class="controls">
            <button type="button" aria-label="帮助">?</button>
            <button type="button" aria-label="关闭"><svg width="7" height="7" viewBox="0 0 7 7"><path d="M0.5 0.5L6.5 6.5M6.5 0.5L0.5 6.5" stroke="#c0c0c0" /></svg></button>
          </div>
        </div>
        <svg class="ratio-chart" viewBox="56 849 1562 93" preserveAspectRatio="none" role="img" aria-label="量比">
          <g class="crisp">
            <path d="M56 849.5H1618M56 883.5H1618" class="dots" />
            <path :d="ratioLine" stroke="#fff" stroke-width="2" fill="none" />
          </g>
        </svg>
        <div class="brand"><strong>财富池</strong><div><b>cfchi.com</b><small>指标交易平台</small></div></div>
      </div>
    </section>
  </div>
</template>

<style>
html, body { background: #0d0d0f; }
</style>

<style scoped>
.app {
  min-height: 100vh;
  display: flex;
  flex-direction: column;
  overflow: hidden;
  background: #0d0d0f;
  color: #e8e8e8;
  font: 15px/20px "Noto Sans", "Noto Sans CJK SC", sans-serif;
}
button { border: 0; padding: 0; background: none; color: inherit; font: inherit; white-space: nowrap; }
ul { margin: 0; padding: 0; list-style: none; }
svg { display: block; }

.toolbar {
  display: flex;
  height: 22px;
  box-sizing: border-box;
  border-top: 1px solid #666;
  border-bottom: 1px solid #2a2a2c;
  font: 12px/20px "Noto Sans CJK SC", sans-serif;
  color: #e4e4e4;
}
.panel-btn { width: 24px; box-sizing: border-box; padding-left: 5px; border-right: 1px solid #2a2a2c; }
.periods { display: flex; flex: 1; gap: 1px; }
.periods button { padding: 0 4px; }
.periods .on { color: #54ffff; }
.periods .spaced { padding: 0 8px; }
.periods .more { display: flex; align-items: center; gap: 3px; }
.tools { display: flex; }
.tools button { width: 35px; box-sizing: border-box; border-left: 1px solid #2a2a2c; }
.tools button:last-child { width: 20px; padding-left: 3px; overflow: hidden; text-align: left; }

.titlebar { display: flex; justify-content: space-between; height: 20px; padding: 0 2px 0 57px; }
.headings { display: flex; gap: 4px; margin: 0; font: inherit; line-height: 18px; }
.headings .wide { padding-right: 5px; }
.title-icons { display: flex; align-items: center; gap: 7px; }

.pane { display: grid; grid-template-columns: 56px 1fr; }
.ruled .plot { border-top: 1px solid #2a2a2c; }
.last { flex: 1; }
.axis { border-right: 1px solid #640000; padding-right: 3px; text-align: right; font-size: 16px; }
.plot { position: relative; min-width: 0; }
.price-axis { margin-top: -13px; line-height: 32px; }
.price-axis .shifted { margin-top: 1px; }
.volume-axis { display: flex; flex-direction: column; justify-content: space-between; height: 112px; margin-top: 6px; line-height: 22px; color: #c0c000; }
.ratio-axis { padding-top: 13px; line-height: 23px; color: #f0f0f0; }

.price-chart, .macd-chart, .board-chart, .ratio-chart { width: 100%; }
.price-chart { height: 562px; }
.macd-chart { height: 92px; }
.board-chart { height: 91px; }
.ratio-chart { height: 93px; }
.crisp { shape-rendering: crispEdges; }
.price { fill: none; stroke: #fff; stroke-width: 2; stroke-linejoin: round; }
.dash { fill: none; stroke-dasharray: 3 3; }
.dots { fill: none; stroke: #640000; stroke-dasharray: 1 2; }

.note { position: absolute; white-space: nowrap; }
.note i { display: inline-block; width: 23px; font-style: normal; text-align: center; }
.caption { display: flex; gap: 7px; height: 20px; padding-left: 1px; line-height: 17px; white-space: nowrap; }
.caption.latin { gap: 4px; font-size: 16px; }
.controls { display: flex; align-items: center; gap: 10px; margin-left: auto; padding-right: 3px; }
.controls button { min-width: 7px; font-weight: 700; font-size: 12px; color: #c0c0c0; }

.brand { position: absolute; right: 32px; top: 45px; display: flex; align-items: center; gap: 8px; height: 40px; color: #fff; }
.brand strong { font: 900 36px/40px "Noto Sans CJK SC", sans-serif; }
.brand div { display: flex; flex-direction: column; }
.brand b { font: 700 16px/20px Lato, sans-serif; }
.brand small { font: 700 11px/18px "Noto Sans CJK SC", sans-serif; text-shadow: 0 0 1px #000; }

.white { color: #f0f0f0; }
.silver { color: #c0c0c0; }
.olive { color: #c0c000; }
.up { color: #ff3c3c; }
.down { color: #00c83c; }
.yellow { color: #ff0; }
.red { color: #f00; }
.aqua { color: #0ff; }
.lime { color: #0f0; }
.dim { color: #666; }
.gold { color: #e0c800; }
.violet { color: #c800c8; }
.magenta { color: #f0f; }
</style>
